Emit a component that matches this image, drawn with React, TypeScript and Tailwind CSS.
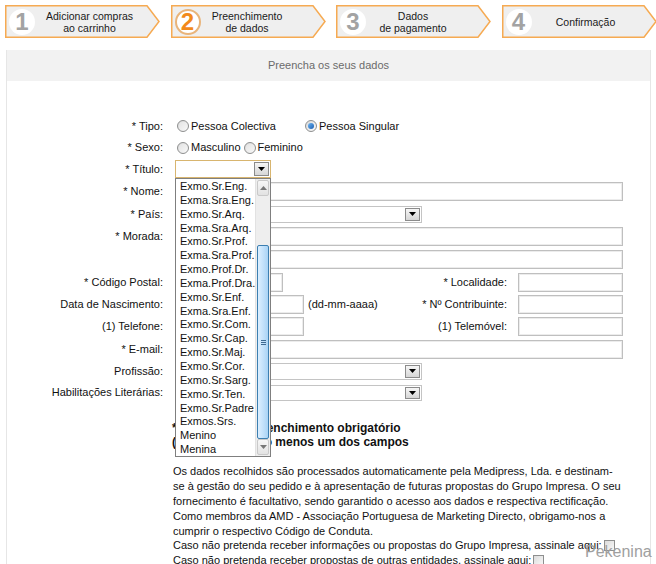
import React from "react";

const font = "font-['Liberation_Sans',Arial,Helvetica,sans-serif]";

function DownTri({ color = "#000" }: { color?: string }) {
  return (
    <svg width="7" height="4" viewBox="0 0 7 4">
      <path d="M0 0h7L3.5 4z" fill={color} />
    </svg>
  );
}

function UpTri({ color = "#777" }: { color?: string }) {
  return (
    <svg width="7" height="4" viewBox="0 0 7 4">
      <path d="M0 4h7L3.5 0z" fill={color} />
    </svg>
  );
}

type StepProps = {
  n: string;
  lines: string[];
  active?: boolean;
  textWidth: string;
};

function Step({ n, lines, active, textWidth }: StepProps) {
  return (
    <div className="relative w-[155px] h-[33px] flex items-center">
      <svg className="absolute inset-0" width="155" height="33" viewBox="0 0 155 33">
        <polygon
          points="0.75,0.75 142,0.75 154,16.5 142,32.25 0.75,32.25"
          fill="#efefef"
          stroke="#f6aa52"
          strokeWidth="1.5"
        />
      </svg>
      <div
        className={
          active
            ? "relative ml-[4px] w-[26px] h-[26px] rounded-full bg-white border-2 border-[#e9b47a] flex items-center justify-center"
            : "relative ml-[4px] w-[26px] h-[26px] rounded-full bg-white flex items-center justify-center"
        }
      >
        <span
          className={
            active
              ? "text-[24px] leading-none font-bold text-[#f28a1a]"
              : "text-[24px] leading-none font-bold text-[#a3a3a3]"
          }
        >
          {n}
        </span>
      </div>
      <div className={`relative ${textWidth} text-center text-[10.5px] leading-[12px] text-[#1a1a1a]`}>
        {lines.map((l) => (
          <div key={l}>{l}</div>
        ))}
      </div>
    </div>
  );
}

function Radio({ checked }: { checked?: boolean }) {
  return (
    <span className="inline-flex w-[12px] h-[12px] rounded-full border border-[#8e8f8f] bg-gradient-to-br from-[#d8d8d8] to-[#fbfbfb] items-center justify-center align-middle">
      {checked ? (
        <span className="w-[6px] h-[6px] rounded-full bg-gradient-to-br from-[#6cb4f2] to-[#1d5fb0]" />
      ) : (
        <span className="w-[8px] h-[8px] rounded-full bg-gradient-to-br from-[#e4e4e4] to-[#f6f6f6]" />
      )}
    </span>
  );
}

function Check() {
  return (
    <span className="inline-block w-[11px] h-[11px] border border-[#8e8f8f] bg-gradient-to-br from-[#dcdcdc] to-[#f8f8f8] align-middle" />
  );
}

function TextBox({ w }: { w: string }) {
  return (
    <input
      type="text"
      readOnly
      className={`${w} h-[19px] border border-[#bfbfbf] bg-white shadow-[inset_0_0_0_1px_#ececec] outline-none`}
    />
  );
}

function SelectBox({ w, h = "h-[17px]", focus }: { w: string; h?: string; focus?: boolean }) {
  return (
    <div
      className={
        focus
          ? `${w} ${h} border border-[#d8b56f] bg-white flex justify-end p-[1px]`
          : `${w} ${h} border border-[#c4c4c4] bg-white flex justify-end p-[1px]`
      }
    >
      <div className="w-[15px] border border-[#8b8b8b] bg-gradient-to-b from-[#f6f6f6] to-[#d6d6d6] flex items-center justify-center">
        <DownTri />
      </div>
    </div>
  );
}

function Row({
  label,
  h,
  children,
}: {
  label: string;
  h: string;
  children?: React.ReactNode;
}) {
  return (
    <div className={`flex items-center ${h}`}>
      <div className="w-[156px] text-right whitespace-nowrap">{label}</div>
      <div className="ml-[12px] w-[448px] flex items-center">{children}</div>
    </div>
  );
}

function SideField({ label }: { label: string }) {
  return (
    <>
      <div className="flex-1 text-right whitespace-nowrap">{label}</div>
      <div className="ml-[11px]">
        <TextBox w="w-[105px]" />
      </div>
    </>
  );
}

const titles = [
  "Exmo.Sr.Eng.",
  "Exma.Sra.Eng.",
  "Exmo.Sr.Arq.",
  "Exma.Sra.Arq.",
  "Exmo.Sr.Prof.",
  "Exma.Sra.Prof.",
  "Exmo.Prof.Dr.",
  "Exma.Prof.Dra.",
  "Exmo.Sr.Enf.",
  "Exma.Sra.Enf.",
  "Exmo.Sr.Com.",
  "Exmo.Sr.Cap.",
  "Exmo.Sr.Maj.",
  "Exmo.Sr.Cor.",
  "Exmo.Sr.Sarg.",
  "Exmo.Sr.Ten.",
  "Exmo.Sr.Padre",
  "Exmos.Srs.",
  "Menino",
  "Menina",
];

function TitleList() {
  return (
    <div className="absolute left-[175px] top-[178px] w-[96px] h-[279px] border border-[#7f7f7f] bg-white flex">
      <div className="flex-1 pt-[1px]">
        {titles.map((t) => (
          <div key={t} className="h-[13.85px] leading-[13.85px] pl-[4px] whitespace-nowrap">
            {t}
          </div>
        ))}
      </div>
      <div className="w-[15px] bg-[#eeeeee] border-l border-[#e2e2e2] flex flex-col">
        <div className="h-[16px] mx-[1px] mt-[1px] rounded-[2px] border border-[#c9c9c9] bg-gradient-to-b from-[#f7f7f7] to-[#e2e2e2] flex items-center justify-center">
          <UpTri />
        </div>
        <div className="h-[49px]" />
        <div className="flex-1 mx-[1px] rounded-[2px] border border-[#3c7fb1] bg-gradient-to-r from-[#dcefff] via-[#c4e2fb] to-[#a9d3f5] flex items-center justify-center">
          <div className="flex flex-col gap-[1px]">
            <div className="w-[5px] h-[1px] bg-[#3d6a92]" />
            <div className="w-[5px] h-[1px] bg-[#3d6a92]" />
            <div className="w-[5px] h-[1px] bg-[#3d6a92]" />
          </div>
        </div>
        <div className="h-[16px] mx-[1px] mb-[1px] rounded-[2px] border border-[#c9c9c9] bg-gradient-to-b from-[#f7f7f7] to-[#e2e2e2] flex items-center justify-center">
          <DownTri color="#777" />
        </div>
      </div>
    </div>
  );
}

export default function App() {
  return (
    <div className={`relative w-[656px] h-[564px] overflow-hidden bg-white text-[11px] text-[#111] ${font}`}>
      {/* checkout steps */}
      <div className="flex gap-[11px] pl-[5px] pt-[5px] h-[50px]">
        <Step n="1" lines={["Adicionar compras", "ao carrinho"]} textWidth="ml-[0px] w-[109px]" />
        <Step n="2" lines={["Preenchimento", "de dados"]} active textWidth="ml-[0px] w-[93px]" />
        <Step n="3" lines={["Dados", "de pagamento"]} textWidth="ml-[0px] w-[94px]" />
        <Step n="4" lines={["Confirmação"]} textWidth="ml-[0px] w-[108px]" />
      </div>

      {/* form panel */}
      <div className="ml-[6px] w-[645px] h-[514px] border-l border-r border-[#e6e6e6]">
        <div className="h-[31px] bg-[#f2f2f2] flex items-center justify-center text-[11px] text-[#6b6b6b]">
          Preencha os seus dados
        </div>

        <div className="pt-[34px]">
          <Row label="* Tipo:" h="h-[22px]">
            <div className="w-[130px] flex items-center">
              <span className="ml-[2px] mr-[2px] flex">
                <Radio />
              </span>
              Pessoa Colectiva
            </div>
            <span className="mr-[2px] flex">
              <Radio checked />
            </span>
            Pessoa Singular
          </Row>
          <Row label="* Sexo:" h="h-[21px]">
            <span className="ml-[2px] mr-[2px] flex">
              <Radio />
            </span>
            Masculino
            <span className="ml-[3px] mr-[2px] flex">
              <Radio />
            </span>
            Feminino
          </Row>
          <Row label="* Título:" h="h-[22px]">
            <SelectBox w="w-[96px]" h="h-[18px]" focus />
          </Row>
          <Row label="* Nome:" h="h-[23px]">
            <TextBox w="w-[448px]" />
          </Row>
          <Row label="* País:" h="h-[22px]">
            <SelectBox w="w-[247px]" />
          </Row>
          <Row label="* Morada:" h="h-[23px]">
            <TextBox w="w-[448px]" />
          </Row>
          <Row label="" h="h-[23px]">
            <TextBox w="w-[448px]" />
          </Row>
          <Row label="* Código Postal:" h="h-[22px]">
            <TextBox w="w-[108px]" />
            <SideField label="* Localidade:" />
          </Row>
          <Row label="Data de Nascimento:" h="h-[22px]">
            <TextBox w="w-[129px]" />
            <span className="ml-[4px]">(dd-mm-aaaa)</span>
            <SideField label="* Nº Contribuinte:" />
          </Row>
          <Row label="(1) Telefone:" h="h-[23px]">
            <TextBox w="w-[129px]" />
            <SideField label="(1) Telemóvel:" />
          </Row>
          <Row label="* E-mail:" h="h-[22px]">
            <TextBox w="w-[448px]" />
          </Row>
          <Row label="Profissão:" h="h-[22px]">
            <SelectBox w="w-[247px]" />
          </Row>
          <Row label="Habilitações Literárias:" h="h-[21px]">
            <SelectBox w="w-[247px]" h="h-[16px]" />
          </Row>

          <div className="ml-[165px] mt-[18px] font-bold text-[12px] leading-[14px]">
            <div>* Campos de preenchimento obrigatório</div>
            <div>(1) Preencha pelo menos um dos campos</div>
          </div>

          <div className="ml-[166px] mt-[15px] text-[11px] leading-[15px] whitespace-nowrap">
            <div>Os dados recolhidos são processados automaticamente pela Medipress, Lda. e destinam-</div>
            <div>se à gestão do seu pedido e à apresentação de futuras propostas do Grupo Impresa. O seu</div>
            <div>fornecimento é facultativo, sendo garantido o acesso aos dados e respectiva rectificação.</div>
            <div>Como membros da AMD - Associação Portuguesa de Marketing Directo, obrigamo-nos a</div>
            <div>cumprir o respectivo Código de Conduta.</div>
            <div className="flex items-center h-[12px]">
              Caso não pretenda receber informações ou propostas do Grupo Impresa, assinale aqui:
              <span className="ml-[2px] flex">
                <Check />
              </span>
            </div>
            <div className="flex items-center h-[18px]">
              Caso não pretenda receber propostas de outras entidades, assinale aqui:
              <span className="ml-[2px] flex">
                <Check />
              </span>
            </div>
          </div>
        </div>
      </div>

      <TitleList />

      <div className="absolute left-[585px] top-[543px] text-[16px] leading-[18px] text-[#a0a0a0] font-['Liberation_Sans',Arial,sans-serif]">
        Pekenina
      </div>
    </div>
  );
}
